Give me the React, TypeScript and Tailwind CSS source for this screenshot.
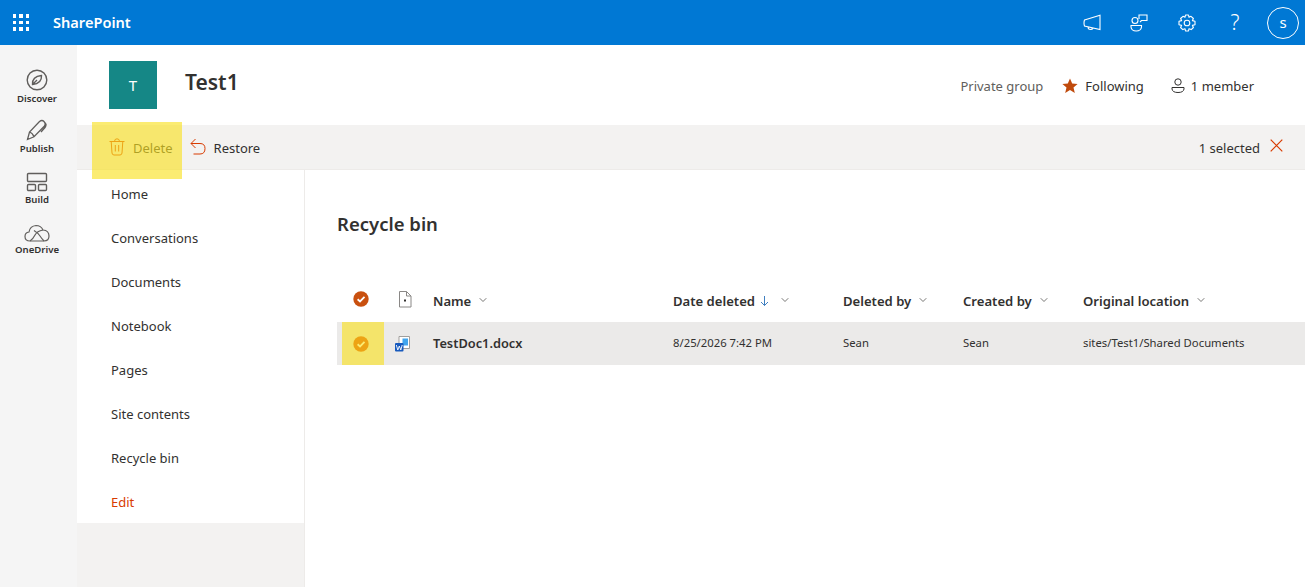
import { ChevronDown } from "lucide-react";

const navItems = ["Home", "Conversations", "Documents", "Notebook", "Pages", "Site contents", "Recycle bin"];

function Waffle() {
  const dots = [0, 1, 2, 3, 4, 5, 6, 7, 8];
  return (
    <div className="grid grid-cols-3 gap-[3px] w-[16px]">
      {dots.map((d) => (
        <div key={d} className="w-[3.4px] h-[3.4px] bg-white" />
      ))}
    </div>
  );
}

function RailItem({ label, children }: { label: string; children: React.ReactNode }) {
  return (
    <div className="h-[50.5px] flex flex-col items-center justify-end">
      {children}
      <span className="text-[9.6px] leading-[13px] font-semibold text-[#323130] mt-[1px]">{label}</span>
    </div>
  );
}

function CheckCircle({ className }: { className: string }) {
  return (
    <svg width="16" height="16" viewBox="0 0 16 16" className={className}>
      <circle cx="8" cy="8" r="7.7" fill="currentColor" />
      <path d="M4.6 8.3 L7 10.4 L11.5 5.8" fill="none" stroke="#fff" strokeWidth="1.8" />
    </svg>
  );
}

function Head({ label, sorted }: { label: string; sorted?: boolean }) {
  return (
    <div className="flex items-center pt-[3px] text-[13.1px] font-semibold text-[#323130]">
      <span>{label}</span>
      {sorted && (
        <svg width="9" height="12" viewBox="0 0 9 12" className="ml-[5px] text-[#3f7fc0]">
          <path d="M4.5 1 V10.5 M1 7 L4.5 10.5 L8 7" fill="none" stroke="currentColor" strokeWidth="1" />
        </svg>
      )}
      <ChevronDown size={12} strokeWidth={1.7} className={`${sorted ? "ml-[10px]" : "ml-[6px]"} mb-[3px] text-[#605e5c]`} />
    </div>
  );
}

export default function App() {
  return (
    <div className="relative h-[587px] w-full overflow-hidden bg-white flex flex-col font-['Noto_Sans',sans-serif] text-[13px] text-[#323130]">
      {/* suite bar */}
      <div className="h-[45px] bg-[#0078d4] flex items-center text-white shrink-0">
        <div className="ml-[13px] w-[40px]">
          <Waffle />
        </div>
        <span className="text-[14.6px] font-semibold">SharePoint</span>
        <div className="ml-auto flex items-center">
          <svg width="18" height="18" viewBox="0 0 18 18" fill="none" stroke="currentColor" strokeWidth="1.1">
            <path d="M1.5 6 L17 1.2 V15.5 L1.5 12 Q.5 9 1.5 6 Z M5 13 Q5 15.5 7.5 15.5 Q9.5 15.5 10 14" />
          </svg>
          <svg width="18" height="18" viewBox="0 0 18 18" fill="none" stroke="currentColor" strokeWidth="1.1" className="ml-[29px]">
            <circle cx="5" cy="6.5" r="3" />
            <path d="M9 5 V1 H17 V6.5 H11.5 L10 8" />
            <path d="M1 11.5 H11.5 V13 Q11 17 6.2 17 Q1.5 17 1 13 Z" />
          </svg>
          <svg width="18" height="18" viewBox="0 0 18 18" fill="none" stroke="currentColor" strokeWidth="1.1" className="ml-[30px]">
            <circle cx="9" cy="9" r="2.8" />
            <path d="M7.5 1 H10.5 L11 3.3 L13 2.3 L15.4 4.5 L14.4 6.6 L17 7.3 V10.7 L14.4 11.4 L15.4 13.5 L13.2 15.6 L11 14.7 L10.5 17 H7.5 L7 14.7 L4.8 15.6 L2.6 13.5 L3.6 11.4 L1 10.7 V7.3 L3.6 6.6 L2.6 4.5 L5 2.3 L7 3.3 Z" strokeLinejoin="round" />
          </svg>
          <span className="ml-[33px] w-[12px] text-center text-[21px] font-light leading-none">?</span>
          <div className="ml-[26px] mr-[6px] w-[32px] h-[32px] rounded-full border border-white flex items-center justify-center text-[15px]">
            s
          </div>
        </div>
      </div>

      <div className="flex flex-1 min-h-0">
        {/* app rail */}
        <div className="w-[77px] bg-[#f5f5f5] shrink-0 flex flex-col pt-[9px] pr-[3px]">
          <RailItem label="Discover">
            <svg width="22" height="22" viewBox="0 0 22 22" fill="none" stroke="#605e5c" strokeWidth="1.4">
              <circle cx="11" cy="11" r="9.8" />
              <path d="M6.5 15.5 Q6 7.5 15.5 6.5 Q16 14.5 6.5 15.5 Z M6.5 15.5 L11 11" />
            </svg>
          </RailItem>
          <RailItem label="Publish">
            <svg width="22" height="22" viewBox="0 0 22 22" fill="none" stroke="#605e5c" strokeWidth="1.3">
              <path d="M1.5 20.5 L3.5 13 L13.5 2.5 Q16 0.5 18 2.5 Q20 4.5 18.5 7 L8 17.8 Z M3.5 13 Q6.5 14 8 17.8 M18 3 Q21.5 5 19 8.5 L15 13" />
            </svg>
          </RailItem>
          <RailItem label="Build">
            <svg width="22" height="20" viewBox="0 0 22 20" fill="none" stroke="#605e5c" strokeWidth="1.4">
              <rect x="1.5" y="1.5" width="19" height="8" rx="1" />
              <rect x="1.5" y="12.5" width="8" height="6" rx="1" />
              <rect x="12.5" y="12.5" width="8" height="6" rx="1" />
            </svg>
          </RailItem>
          <RailItem label="OneDrive">
            <svg width="26" height="18" viewBox="0 0 26 18" fill="none" stroke="#605e5c" strokeWidth="1.2">
              <path d="M6 17 Q1 17 1 12.5 Q1 8.5 5 8 Q6 2 12 1.5 Q17 1.5 19 6 Q25 6.5 25 12 Q25 17 20 17 Z" />
              <path d="M6 17 Q9 15 11 11 Q13 7 19 6 M10 6.5 Q14 9 16 12 Q18 15 20 17" />
            </svg>
          </RailItem>
        </div>

        <div className="flex-1 min-w-0 flex flex-col">
          {/* site header */}
          <div className="h-[80px] shrink-0 flex items-start">
            <div className="ml-[32px] mt-[16px] w-[48px] h-[48px] bg-[#158786] text-white flex items-center justify-center text-[15px]">
              T
            </div>
            <h1 className="ml-[28px] mt-[19px] text-[21px] leading-[36px] font-semibold">Test1</h1>
            <div className="ml-auto mt-[30px] flex items-center leading-[22px] mr-[51px]">
              <span className="text-[#605e5c]">Private group</span>
              <svg width="16" height="16" viewBox="0 0 16 16" className="ml-[19px] text-[#c04a0c]">
                <path d="M8 .6 L10.2 5.5 L15.6 6 L11.5 9.6 L12.8 15 L8 12.1 L3.2 15 L4.5 9.6 L.4 6 L5.8 5.5 Z" fill="currentColor" />
              </svg>
              <span className="ml-[7px]">Following</span>
              <svg width="14" height="16" viewBox="0 0 14 16" fill="none" stroke="#323130" strokeWidth="1" className="ml-[27px]">
                <circle cx="7" cy="4" r="3.2" />
                <path d="M1 9.5 H13 V11 Q12.5 14.5 7 14.5 Q1.5 14.5 1 11 Z" />
              </svg>
              <span className="ml-[6px]">1 member</span>
            </div>
          </div>

          {/* command bar */}
          <div className="h-[45px] shrink-0 bg-[#f3f2f1] border-b border-[#edebe9] flex items-center">
            <svg width="16" height="18" viewBox="0 0 16 18" fill="none" stroke="#d83b01" strokeWidth="1" className="ml-[32px]">
              <path d="M.5 3.5 H15.5 M5.5 3.5 Q5.5 .8 8 .8 Q10.5 .8 10.5 3.5 M2.2 3.5 L3 15 Q3.2 17 5 17 H11 Q12.8 17 13 15 L13.8 3.5 M6.3 7 V13.5 M9.7 7 V13.5" />
            </svg>
            <span className="ml-[8px] pt-[4px]">Delete</span>
            <svg width="16" height="18" viewBox="0 0 16 18" fill="none" stroke="#d83b01" strokeWidth="1" className="ml-[17px]">
              <path d="M5.5 1 L1 5.5 L5.5 10 M1 5.5 H10 Q15 5.5 15 10.5 Q15 16 10 16 H3.5" />
            </svg>
            <span className="ml-[8px] pt-[4px]">Restore</span>
            <span className="ml-auto pt-[4px]">1 selected</span>
            <svg width="13" height="13" viewBox="0 0 13 13" stroke="#d83b01" strokeWidth="1.2" className="ml-[10px] mr-[22px] mb-[3px]">
              <path d="M.7 .7 L12.3 12.3 M12.3 .7 L.7 12.3" />
            </svg>
          </div>

          <div className="flex flex-1 min-h-0">
            {/* left nav */}
            <div className="w-[228px] shrink-0 bg-[#f3f2f1] border-r border-[#edebe9]">
              <div className="bg-white pt-[1px]">
                {navItems.map((item) => (
                  <div key={item} className="h-[44px] flex items-center pl-[34px] pt-[4px]">
                    {item}
                  </div>
                ))}
                <div className="h-[44px] flex items-center pl-[34px] pt-[4px] text-[#d83b01]">Edit</div>
              </div>
            </div>

            {/* recycle bin list */}
            <div className="flex-1 min-w-0 pl-[32px]">
              <h2 className="mt-[39px] h-[30px] text-[18.5px] leading-[30px] font-semibold">Recycle bin</h2>
              <div className="mt-[39px] h-[44px] grid grid-cols-[46px_50px_240px_170px_120px_120px_1fr] items-center">
                <CheckCircle className="ml-[16px] mb-[2px] text-[#c9500f]" />
                <svg width="14" height="17" viewBox="0 0 14 17" fill="none" stroke="#8a8886" strokeWidth="1" className="ml-[15px] mb-[2px]">
                  <path d="M1.5 .5 H8.5 L13 5 V16 H1.5 Z M8.5 .5 V5 H13" />
                  <rect x="6" y="8.5" width="2" height="2" fill="#323130" stroke="none" />
                </svg>
                <Head label="Name" />
                <Head label="Date deleted" sorted />
                <Head label="Deleted by" />
                <Head label="Created by" />
                <Head label="Original location" />
              </div>
              <div className="h-[43px] bg-[#ebeae9] grid grid-cols-[46px_50px_240px_170px_120px_120px_1fr] items-center text-[11.3px]">
                <CheckCircle className="ml-[16px] text-[#d83b01]" />
                <svg width="15" height="16" viewBox="0 0 15 16" className="ml-[12px]">
                  <path d="M4 .5 H14.5 V12.5 H4 Z" fill="#fff" stroke="#a19f9d" />
                  <rect x="7.5" y="2.5" width="5.5" height="7" fill="#41a5ee" />
                  <rect x="0" y="7" width="8.5" height="8.5" rx="1" fill="#185abd" />
                  <path d="M1.3 9 L2.8 14 L4.3 10 L5.8 14 L7.2 9" fill="none" stroke="#fff" strokeWidth=".9" />
                </svg>
                <span className="text-[12.8px] font-semibold">TestDoc1.docx</span>
                <span>8/25/2026 7:42 PM</span>
                <span>Sean</span>
                <span>Sean</span>
                <span>sites/Test1/Shared Documents</span>
              </div>
            </div>
          </div>
        </div>
      </div>

      {/* highlighter marks drawn over the screenshot */}
      <div className="absolute left-[92px] top-[122px] w-[90px] h-[57px] bg-[#f9e11f]/63" />
      <div className="absolute left-[342px] top-[322px] w-[42px] h-[43px] bg-[#f9e11f]/63" />
    </div>
  );
}
